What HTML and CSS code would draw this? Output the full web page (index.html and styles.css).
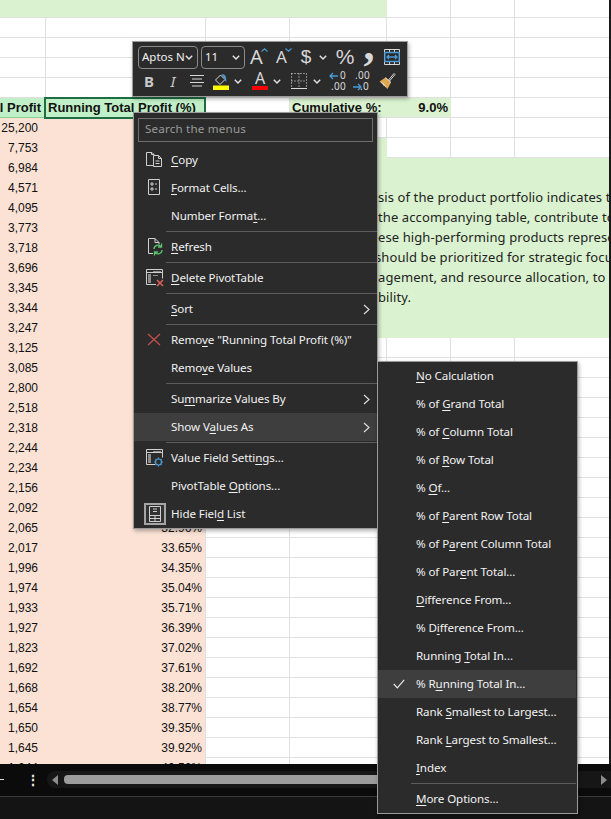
FILE: index.html
```html
<!DOCTYPE html>
<html lang="en">
<head>
<meta charset="utf-8">
<title>PivotTable context menu</title>
<link rel="stylesheet" href="styles.css">
</head>
<body>
<div class="app">
  <main class="sheet">
    <div class="band"></div>
    <div class="hd hd-a"><span>Total Profit</span></div>
    <div class="hd hd-b">Running Total Profit (%)</div>
    <div class="hd-cum"><span>Cumulative %:</span><span>9.0%</span></div>
    <div class="peach"></div>
    <div class="col col-a">
      <div>25,200</div><div>7,753</div><div>6,984</div><div>4,571</div><div>4,095</div><div>3,773</div><div>3,718</div><div>3,696</div><div>3,345</div><div>3,344</div><div>3,247</div><div>3,125</div><div>3,085</div><div>2,800</div><div>2,518</div><div>2,318</div><div>2,244</div><div>2,234</div><div>2,156</div><div>2,092</div><div>2,065</div><div>2,017</div><div>1,996</div><div>1,974</div><div>1,933</div><div>1,927</div><div>1,823</div><div>1,692</div><div>1,668</div><div>1,654</div><div>1,650</div><div>1,645</div><div>1,644</div>
    </div>
    <div class="col col-b">
      <div>32.96%</div><div>33.65%</div><div>34.35%</div><div>35.04%</div><div>35.71%</div><div>36.39%</div><div>37.02%</div><div>37.61%</div><div>38.20%</div><div>38.77%</div><div>39.35%</div><div>39.92%</div><div>40.50%</div>
    </div>
    <div class="stub"></div>
    <div class="note">
      <div>sis of the product portfolio indicates that</div>
      <div>the accompanying table, contribute to a</div>
      <div>ese high-performing products represent</div>
      <div class="hang">should be prioritized for strategic focus</div>
      <div>agement, and resource allocation, to maximize</div>
      <div>bility.</div>
    </div>
  </main>

  <footer class="chrome">
    <div class="tabbar">
      <span class="dash"></span>
      <span class="dots">⋮</span>
      <div class="track">
        <span class="tri tri-l"></span>
        <span class="thumb"></span>
        <span class="tri tri-r"></span>
      </div>
    </div>
    <div class="status"></div>
  </footer>

  <div class="mini">
    <div class="mini-row">
      <div class="combo combo-font"><span class="combo-text">Aptos Ni</span><svg class="chev" viewBox="0 0 8 5"><path d="M.8.8 4 4 7.2.8"/></svg></div>
      <div class="combo combo-size"><span class="combo-text">11</span><svg class="chev" viewBox="0 0 8 5"><path d="M.8.8 4 4 7.2.8"/></svg></div>
      <div class="tb w27"><span class="t-a">A</span><svg class="caret" viewBox="0 0 7 4"><path d="M.5 3.5 3.5.8 6.5 3.5"/></svg></div>
      <div class="tb w24"><span class="t-a t-sm">A</span><svg class="caret" viewBox="0 0 7 4"><path d="M.5.5 3.5 3.2 6.5.5"/></svg></div>
      <div class="tb w20"><span class="t-d">$</span></div>
      <div class="tb w14"><svg class="chev" viewBox="0 0 8 5"><path d="M.8.8 4 4 7.2.8"/></svg></div>
      <div class="tb w30"><span class="t-p">%</span></div>
      <div class="tb w18"><span class="t-c">,</span></div>
      <div class="tb w28">
        <svg class="ic16" viewBox="0 0 16 16"><path class="s-w" d="M.5.5h15v15H.5zM.5 3.5h15M.5 12.5h15M5.5.5v3M10.5.5v3M5.5 12.5v3M10.5 12.5v3"/><path class="f-dk" d="M1 3.5h14v9H1z"/><path class="s-b" d="M.8 3.5h14.4v9H.8z"/><path class="s-b" d="M3 8h10M5 6 3 8l2 2M11 6l2 2-2 2"/></svg>
      </div>
    </div>
    <div class="mini-row row2">
      <div class="tb w22"><span class="t-b">B</span></div>
      <div class="tb w26"><span class="t-i">I</span></div>
      <div class="tb w22"><svg class="ic16" viewBox="0 0 16 16"><path class="s-w" d="M1 2.5h14M3 6h10M1 9.5h14M3 13h10"/></svg></div>
      <div class="tb w24 m1">
        <svg class="ic18" viewBox="0 0 18 18"><path class="s-w" d="M3.5 8 8.5 3l4.500 4.500-5 5z"/><path d="M9.500 2.500c2-1 4.500.5 4.500 3.500 0 1.500.5 2.500.5 3.500-1.500 0-1.500-2-2-3z" class="f-b"/><path class="f-y" d="M1 13.500h16V18H1z"/></svg>
      </div>
      <div class="tb w10"><svg class="chev" viewBox="0 0 8 5"><path d="M.8.8 4 4 7.2.8"/></svg></div>
      <div class="tb w24 m5 color-a"><span class="t-fa">A</span><span class="bar-red"></span></div>
      <div class="tb w10"><svg class="chev" viewBox="0 0 8 5"><path d="M.8.8 4 4 7.2.8"/></svg></div>
      <div class="tb w24 m5"><svg class="ic16" viewBox="0 0 16 16"><path class="s-dot" d="M.5.5h15M.5.5v15M15.500.5v15M8 .5v15M.5 8h15"/><path class="s-w" d="M0 15.500h16"/></svg></div>
      <div class="tb w10 m1"><svg class="chev" viewBox="0 0 8 5"><path d="M.8.8 4 4 7.2.8"/></svg></div>
      <div class="tb w23 m4 dec">
        <svg class="arrow" viewBox="0 0 9 8"><path class="s-b" d="M9 4H1M4 1 1 4l3 3"/></svg><span class="dec-top">0</span><span class="dec-bot">.00</span>
      </div>
      <div class="tb w23 m1 dec">
        <span class="dec-top2">.00</span><svg class="arrow arrow2" viewBox="0 0 9 8"><path class="s-b" d="M0 4h8M5 1l3 3-3 3"/></svg><span class="dec-bot2">.0</span>
      </div>
      <div class="tb w23 m2">
        <svg class="ic18" viewBox="0 0 18 18"><path class="s-w" d="m10.500 8 5.500-6.500 1 1L11.500 9z"/><path d="M1.500 9.500 7.500 5.500l5.500 5-3.500 6.500z" class="f-o"/><path class="s-w" d="M7.500 5.500l5.500 5M5 11l3 4M3.500 10l3 4"/></svg>
      </div>
    </div>
  </div>

  <nav class="menu ctx">
    <div class="search">Search the menus</div>
    <div class="mi"><svg class="ic" viewBox="0 0 20 20"><path class="s-g" d="M8.500 15.500h-7v-13H7l2 2v1M8.500 5.500h5l3 3v8h-8zM13.500 5.500v3h3M10.500 11h4M10.500 13.500h4M6.500 2.500v2H9"/></svg><span><u>C</u>opy</span></div>
    <div class="mi"><svg class="ic" viewBox="0 0 20 20"><path class="s-g" d="M3.500 1.500h11v15h-11zM6 5h2v2H6zM6 10h2v2H6zM10 6h2M10 11h2"/></svg><span><u>F</u>ormat Cells...</span></div>
    <div class="mi"><span class="ic"></span><span>Number Forma<u>t</u>...</span></div>
    <div class="sep"></div>
    <div class="mi"><svg class="ic" viewBox="0 0 20 20"><path class="s-g" d="M8 16.500H3.500v-15H10l4 4v2M10 1.500v4h4"/><path class="s-gr" d="M9 12a4 4 0 0 1 7-2.500M17 13a4 4 0 0 1-7 2.500M16.500 6.500v3.500H13M9.500 18.500V15H13"/></svg><span><u>R</u>efresh</span></div>
    <div class="sep"></div>
    <div class="mi"><svg class="ic" viewBox="0 0 20 20"><path class="s-g" d="M11 16.500H1.500v-15h16v9M1.500 4.500h16"/><path class="f-g" d="M3 6h3v9H3zM8 3h8v1H8zM8 7h5v1H8z"/><path class="s-r" d="m12 12 6 6M18 12l-6 6"/></svg><span><u>D</u>elete PivotTable</span></div>
    <div class="sep"></div>
    <div class="mi has-sub"><span class="ic"></span><span><u>S</u>ort</span><svg class="sub" viewBox="0 0 7 11"><path d="m1 1 5 4.500-5 4.500"/></svg></div>
    <div class="sep"></div>
    <div class="mi"><svg class="ic" viewBox="0 0 20 20"><path class="s-r2" d="m3 4 12 11M15 4 3 15"/></svg><span>Remo<u>v</u>e "Running Total Profit (%)"</span></div>
    <div class="mi"><span class="ic"></span><span>Remo<u>v</u>e Values</span></div>
    <div class="sep"></div>
    <div class="mi has-sub"><span class="ic"></span><span>Su<u>m</u>marize Values By</span><svg class="sub" viewBox="0 0 7 11"><path d="m1 1 5 4.500-5 4.500"/></svg></div>
    <div class="mi has-sub on"><span class="ic"></span><span>Show V<u>a</u>lues As</span><svg class="sub" viewBox="0 0 7 11"><path d="m1 1 5 4.500-5 4.500"/></svg></div>
    <div class="sep"></div>
    <div class="mi"><svg class="ic" viewBox="0 0 20 20"><path class="s-g" d="M10 16.500H1.500v-15h16v8M1.500 4.500h16"/><path class="f-g" d="M3 6h3v9H3zM8 3h8v1H8z"/><circle class="s-bl" cx="13.500" cy="14" r="3"/><path class="s-bl" d="M13.500 9.500v1.500M13.500 17v1.500M9 14h1.500M16.500 14H18M10.500 11l1 1M15.500 16l1 1M16.500 11l-1 1M11.500 16l-1 1"/></svg><span>Value Field Setti<u>n</u>gs...</span></div>
    <div class="mi"><span class="ic"></span><span>PivotTable <u>O</u>ptions...</span></div>
    <div class="mi"><span class="ic toggled"><svg viewBox="0 0 20 20"><path class="s-g" d="M4.500 2.500h11v15h-11zM4.500 11.500h11M4.500 14.500h11M10 11.500v6M8 5h4M8 7.500h4"/></svg></span><span>Hide Fiel<u>d</u> List</span></div>
  </nav>

  <nav class="menu subm">
    <div class="mi"><span><u>N</u>o Calculation</span></div>
    <div class="mi"><span>% of <u>G</u>rand Total</span></div>
    <div class="mi"><span>% of <u>C</u>olumn Total</span></div>
    <div class="mi"><span>% of <u>R</u>ow Total</span></div>
    <div class="mi"><span>% <u>O</u>f...</span></div>
    <div class="mi"><span>% of <u>P</u>arent Row Total</span></div>
    <div class="mi"><span>% of P<u>a</u>rent Column Total</span></div>
    <div class="mi"><span>% of Par<u>e</u>nt Total...</span></div>
    <div class="mi"><span><u>D</u>ifference From...</span></div>
    <div class="mi"><span>% D<u>i</u>fference From...</span></div>
    <div class="mi"><span>Running <u>T</u>otal In...</span></div>
    <div class="mi on"><svg class="check" viewBox="0 0 12 10"><path d="m.8 5 3.500 3.800L11.200.8"/></svg><span>% R<u>u</u>nning Total In...</span></div>
    <div class="mi"><span>Rank <u>S</u>mallest to Largest...</span></div>
    <div class="mi"><span>Rank <u>L</u>argest to Smallest...</span></div>
    <div class="mi"><span><u>I</u>ndex</span></div>
    <div class="sep"></div>
    <div class="mi"><span><u>M</u>ore Options...</span></div>
  </nav>
</div>
</body>
</html>
```
FILE: styles.css
```css
* { box-sizing: border-box; }
html, body { margin: 0; padding: 0; }
body { background: #1a1a1a; }
.app { position: relative; width: 611px; height: 819px; overflow: hidden; display: flex; flex-direction: column; }

/* worksheet */
.sheet {
  width: 609px; height: 764px; flex: none; overflow: hidden; background-color: #fff;
  display: grid;
  grid-template-columns: 46px 160px 84px 97px 64px 64px 64px 30px;
  grid-template-rows: 18px;
  grid-auto-rows: 20px;
  font: 12px/20px "Liberation Sans", Arial, sans-serif;
  color: #111;
  background-image:
    linear-gradient(#e0e0e0, #e0e0e0), linear-gradient(#e0e0e0, #e0e0e0), linear-gradient(#e0e0e0, #e0e0e0),
    linear-gradient(#e0e0e0, #e0e0e0), linear-gradient(#e0e0e0, #e0e0e0), linear-gradient(#e0e0e0, #e0e0e0),
    linear-gradient(#e0e0e0 1px, transparent 1px);
  background-size: 1px 100%, 1px 100%, 1px 100%, 1px 100%, 1px 100%, 1px 100%, 100% 20px;
  background-position: 45px 0, 205px 0, 289px 0, 386px 0, 450px 0, 514px 0, 0 17px;
  background-repeat: no-repeat, no-repeat, no-repeat, no-repeat, no-repeat, no-repeat, repeat-y;
}
.band { grid-column: 1 / 5; grid-row: 1; background: #daf2d0; margin-bottom: 1px; }
.hd { grid-row: 6; background: #c1f0c8; font-weight: 700; font-size: 13px; white-space: nowrap; overflow: hidden; }
.hd-a { grid-column: 1; display: flex; justify-content: flex-end; padding-right: 5px; border-bottom: 1px solid #86cf8f; }
.hd-b { grid-column: 2; width: 159px; padding-left: 2px; position: relative; overflow: visible; }
.hd-b::after { content: ""; position: absolute; left: -2px; right: -1px; top: -1px; bottom: -1px; border: 2px solid #1f6e43; }
.hd-cum { grid-column: 4 / 6; grid-row: 6; background: #daf2d0; font-weight: 700; font-size: 13px; display: flex; justify-content: space-between; padding: 0 3px 0 2px; margin-bottom: 1px; white-space: nowrap; }
.peach { grid-column: 1 / 3; grid-row: 7 / span 33; background: #fbe2d5; width: 205px; }
.col { text-align: right; }
.col-a { grid-column: 1; grid-row: 7 / span 33; padding-right: 8px; }
.col-b { grid-column: 2; grid-row: 27 / span 13; width: 159px; padding-right: 3px; }
.stub { grid-column: 4; grid-row: 8; background: #daf2d0; }
.note {
  grid-column: 4 / 9; grid-row: 9 / span 9; background: #daf2d0; overflow: hidden; white-space: nowrap;
  padding: 29px 0 0 88px; font: 13px/20px "Noto Sans", sans-serif; letter-spacing: .1px; color: #222;
}
.hang { margin-left: -3px; }

/* bottom chrome */
.chrome { flex: 1; display: flex; flex-direction: column; }
.tabbar { height: 33px; flex: none; background: #0b0b0b; border-bottom: 1px solid #3a3a3a; display: flex; align-items: center; padding-bottom: 1px; }
.dash { width: 4px; height: 1px; background: #ddd; }
.dots { width: 8px; margin: 0 13px 0 22px; color: #e8e8e8; font: 700 14px/1 "Noto Sans", sans-serif; text-align: center; }
.track { flex: 1; height: 17px; background: #161616; border-radius: 8px 0 0 8px; display: flex; align-items: center; padding: 0 4px 0 5px; }
.thumb { width: 340px; height: 9px; background: #9c9c9c; border-radius: 4px; margin-left: 6px; }
.tri { width: 0; height: 0; border-style: solid; border-color: transparent; border-width: 5px 0; }
.tri-l { border-right: 6px solid #8c8c8c; }
.tri-r { border-left: 6px solid #8c8c8c; margin-left: auto; }
.status { flex: 1; background: #141414; }

/* menus */
.menu, .mini {
  position: absolute; background: #2b2b2b; border: 1px solid #9b9b9b; color: #f2f2f2;
  font: 11.6px/16px "Noto Sans", sans-serif; letter-spacing: -.1px; box-shadow: 1px 2px 4px rgba(0,0,0,.3);
}
.ctx { left: 133px; top: 112px; width: 245px; height: 417px; padding-top: 5px; }
.subm { left: 377px; top: 361px; width: 201px; height: 453px; padding-right: 1px; }
.search { height: 24px; margin: 0 4px 4px; border: 1px solid #6e6e6e; color: #9a9a9a; padding: 2px 6px; letter-spacing: .2px; }
.mi { height: 28px; display: flex; align-items: center; padding-left: 11px; white-space: nowrap; }
.subm .mi { padding-left: 38px; position: relative; }
.mi u { text-underline-offset: 2px; text-decoration-thickness: 1px; }
.mi .ic { width: 20px; height: 20px; margin-right: 6px; flex: none; }
.on { background: #3e3e3e; }
.sep { height: 1px; margin: 1px 0 1px 32px; background: #5c5c5c; }
.subm .sep { margin-left: 33px; }
.sub { width: 7px; height: 11px; margin-left: auto; margin-right: 7px; fill: none; stroke: #dcdcdc; stroke-width: 1.200; }
.check { position: absolute; left: 15px; top: 9px; width: 12px; height: 10px; fill: none; stroke: #e8e8e8; stroke-width: 1.200; }
.toggled { background: #333; outline: 2px solid #a5a5a5; outline-offset: -1px; }
.toggled svg { width: 20px; height: 20px; display: block; }
svg path, svg circle { fill: none; }
.s-g { stroke: #cfcfcf; stroke-width: 1; }
.s-gr { stroke: #5cc46e; stroke-width: 1.300; }
.s-r { stroke: #e0605c; stroke-width: 1.500; }
.s-r2 { stroke: #c44f4d; stroke-width: 1.300; }
.s-bl { stroke: #4a9bd6; stroke-width: 1.200; }
svg .f-g { fill: #8c8c8c; }

/* mini toolbar */
.mini { left: 132px; top: 41px; width: 276px; height: 56px; padding: 3px 0 0 5px; letter-spacing: 0; }
.mini-row { display: flex; align-items: center; height: 24px; }
.row2 { margin-top: 0; height: 24px; }
.combo { height: 23px; border: 1px solid #8a8a8a; border-radius: 4px; display: flex; align-items: center; justify-content: space-between; padding: 0 4px 0 2px; }
.combo-font { width: 60px; margin-right: 3px; }
.combo-size { width: 44px; }
.combo-text { font-size: 11.5px; white-space: nowrap; overflow: hidden; padding-left: 1px; max-width: 46px; }
.chev { width: 8px; height: 5px; flex: none; }
.chev path { stroke: #e6e6e6; stroke-width: 1.400; }
.tb { position: relative; height: 24px; flex: none; display: flex; align-items: center; justify-content: center; color: #d8d8d8; }
.w10 { width: 10px; } .w14 { width: 14px; } .w18 { width: 18px; } .w20 { width: 20px; } .w22 { width: 22px; }
.w23 { width: 23px; } .w24 { width: 24px; } .w26 { width: 26px; } .w27 { width: 27px; } .w28 { width: 28px; } .w30 { width: 30px; }
.m1 { margin-left: 1px; } .m2 { margin-left: 2px; } .m4 { margin-left: 4px; } .m5 { margin-left: 5px; }
.t-a { font-size: 20px; line-height: 24px; margin-right: 4px; }
.t-sm { font-size: 17px; margin-right: 5px; }
.caret { position: absolute; right: 4px; top: 3px; width: 7px; height: 4px; }
.caret path { stroke: #4a9bd6; stroke-width: 1.200; }
.t-d { font: 19px/24px "Liberation Sans", sans-serif; }
.t-p { font: 21px/24px "Liberation Sans", sans-serif; }
.t-c { font: 700 44px/24px "Liberation Serif", serif; transform: translateY(-11px); }
.ic16 { width: 16px; height: 16px; }
.ic18 { width: 18px; height: 18px; }
.s-w { stroke: #d8d8d8; stroke-width: 1; }
.s-b { stroke: #4a9bd6; stroke-width: 1.300; }
svg .f-dk { fill: #2b2b2b; }
svg .f-b { fill: #4a9bd6; }
svg .f-y { fill: #ffff00; }
svg .f-o { fill: #e0a64c; }
.s-dot { stroke: #e8e8e8; stroke-width: 1; stroke-dasharray: 1 2; }
.t-b { font: 700 15px/24px "Noto Sans", sans-serif; color: #c8c8c8; }
.t-i { font: italic 15px/24px "Noto Sans", sans-serif; color: #c8c8c8; }
.color-a { flex-direction: column; justify-content: flex-start; }
.t-fa { font-size: 16px; line-height: 18px; }
.bar-red { width: 16px; height: 4px; background: #ff0000; margin-top: -1px; }
.dec { font-size: 10px; line-height: 10px; color: #d8d8d8; }
.dec-top, .dec-bot, .dec-top2, .dec-bot2 { position: absolute; letter-spacing: .3px; }
.dec-top { right: 3px; top: 1px; }
.dec-bot { right: 3px; top: 12px; }
.dec-top2 { right: 3px; top: 1px; }
.dec-bot2 { right: 4px; top: 12px; }
.arrow { position: absolute; left: 3px; top: 3px; width: 9px; height: 8px; }
.arrow2 { left: 3px; top: 14px; }
```
